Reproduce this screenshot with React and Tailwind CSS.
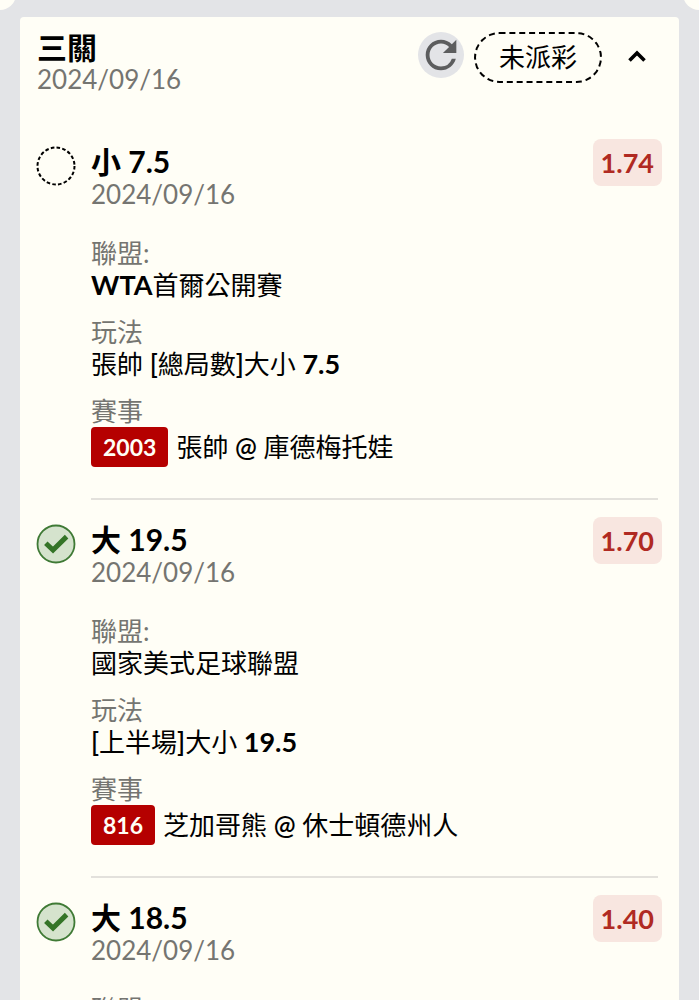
import { useState } from 'react'
import { MdRefresh } from 'react-icons/md'

const legs = [
  {
    side: '小',
    line: '7.5',
    date: '2024/09/16',
    odds: '1.74',
    status: 'pending',
    league: 'WTA首爾公開賽',
    market: '張帥 [總局數]大小 7.5',
    matchId: '2003',
    match: '張帥 @ 庫德梅托娃',
  },
  {
    side: '大',
    line: '19.5',
    date: '2024/09/16',
    odds: '1.70',
    status: 'won',
    league: '國家美式足球聯盟',
    market: '[上半場]大小 19.5',
    matchId: '816',
    match: '芝加哥熊 @ 休士頓德州人',
  },
  {
    side: '大',
    line: '18.5',
    date: '2024/09/16',
    odds: '1.40',
    status: 'won',
  },
]

// latin letters and numbers are set heavier than the Chinese text around them
function Mixed({ children }) {
  return children.split(/([A-Za-z0-9.]+|[@[\]])/).map((part, i) => {
    if (/^[A-Za-z0-9.]+$/.test(part)) {
      return (
        <span key={i} className="text-[27px] font-bold">
          {part}
        </span>
      )
    }
    if (/^[@[\]]$/.test(part)) {
      return (
        <span key={i} className="font-semibold">
          {part}
        </span>
      )
    }
    return part
  })
}

function StatusIcon({ status }) {
  if (status === 'pending') {
    return (
      <svg viewBox="0 0 40 40" className="mt-px size-10 shrink-0" role="img" aria-label="未派彩">
        <circle cx="20" cy="20" r="18.5" fill="none" stroke="#000" strokeWidth="2" strokeDasharray="3.6 2.21" />
      </svg>
    )
  }
  return (
    <svg viewBox="0 0 40 40" className="mt-px size-10 shrink-0" role="img" aria-label="贏">
      <circle cx="20" cy="20" r="18.5" fill="#d5e3cd" stroke="#3f7a35" strokeWidth="1.8" />
      <path d="M9.8 19.2 17 26 30.6 12.6" fill="none" stroke="#347427" strokeWidth="5" />
    </svg>
  )
}

function Field({ label, children }) {
  return (
    <div>
      <dt className="text-[#757571]">{label}</dt>
      {children}
    </div>
  )
}

function Leg({ leg, last }) {
  return (
    <li className="flex gap-[15px]">
      <StatusIcon status={leg.status} />
      <div className={`mr-1 min-w-0 flex-1 pb-[31px] ${last ? '' : 'border-b-2 border-[#e3e1dc]'}`}>
        <div className="flex items-start justify-between">
          <div>
            <h2 className="text-[30px] leading-[33px] font-bold">
              {leg.side} {leg.line}
            </h2>
            <p className="text-[#757571]">{leg.date}</p>
          </div>
          <span className="-mt-1.5 -mr-1 rounded-lg bg-[#f8e6e0] px-2 py-2 text-[27px] leading-[31px] font-bold text-[#b02a22]">
            {leg.odds}
          </span>
        </div>
        <dl className="mt-[27px] flex flex-col gap-[15px]">
          <Field label="聯盟:">
            {leg.league && (
              <dd>
                <Mixed>{leg.league}</Mixed>
              </dd>
            )}
          </Field>
          {leg.market && (
            <Field label="玩法">
              <dd>
                <Mixed>{leg.market}</Mixed>
              </dd>
            </Field>
          )}
          {leg.match && (
            <Field label="賽事">
              <dd className="flex items-center gap-2">
                <span className="rounded-sm bg-[#b50000] px-3 py-1 text-[23px] leading-8 font-bold text-[#fffef6]">
                  {leg.matchId}
                </span>
                <span>
                  <Mixed>{leg.match}</Mixed>
                </span>
              </dd>
            </Field>
          )}
        </dl>
      </div>
    </li>
  )
}

export default function App() {
  const [open, setOpen] = useState(true)

  return (
    <main
      lang="zh-Hant"
      className="relative h-screen overflow-hidden bg-[#e3e4e7] px-5 pt-[17px] font-['Lato','Noto_Sans_CJK_TC',sans-serif] text-[26px] leading-8 text-black"
    >
      {/* ticket notches */}
      <div className="absolute -top-[22px] -left-4 size-8 rounded-full bg-[#fffef6]" />
      <div className="absolute -top-[22px] -right-4 size-8 rounded-full bg-[#fffef6]" />

      <section className="min-h-screen rounded-t-sm bg-[#fffef6] pt-[15px] pr-[17px] pl-4">
        <header className="flex items-start justify-between">
          <div className="pl-px">
            <h1 className="text-[30px] leading-[31px] font-bold">三關</h1>
            <p className="text-[#757571]">2024/09/16</p>
          </div>
          <div className="flex items-start pr-1">
            <button
              type="button"
              aria-label="重新整理"
              className="size-[46px] rounded-full bg-[#e3e4e7] text-[#5c5d5e]"
            >
              <MdRefresh size={46} />
            </button>
            <span className="ml-2.5 rounded-full border-2 border-dashed border-black px-[23px] py-2 leading-[31px]">
              未派彩
            </span>
            <button
              type="button"
              aria-label="收合"
              aria-expanded={open}
              onClick={() => setOpen(!open)}
              className="mt-1 ml-4 p-0.5"
            >
              <svg viewBox="0 0 36 36" className={`size-9 ${open ? '' : 'rotate-180'}`} aria-hidden="true">
                <path d="M9.5 22.5 17 15l7.5 7.5" fill="none" stroke="currentColor" strokeWidth="3.6" />
              </svg>
            </button>
          </div>
        </header>

        {open && (
          <ul className="mt-[50px] flex flex-col gap-[23px]">
            {legs.map((leg, i) => (
              <Leg key={i} leg={leg} last={i === legs.length - 1} />
            ))}
          </ul>
        )}
      </section>
    </main>
  )
}
